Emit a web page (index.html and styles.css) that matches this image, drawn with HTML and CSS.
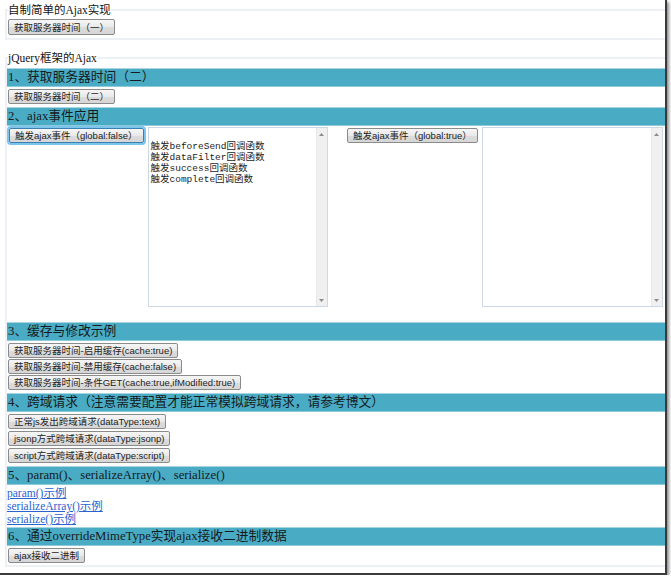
FILE: index.html
```html
<!DOCTYPE html>
<html lang="zh-CN">
<head>
<meta charset="utf-8">
<title>Ajax 示例</title>
<link rel="stylesheet" href="styles.css">
</head>
<body>
<div class="window">
  <fieldset class="box box-first">
    <legend>自制简单的Ajax实现</legend>
    <button class="btn btn-tall">获取服务器时间（一）</button>
  </fieldset>

  <fieldset class="box box-second">
    <legend>jQuery框架的Ajax</legend>

    <h3 class="bar bar-first">1、获取服务器时间（二）</h3>
    <div class="sec">
      <button class="btn">获取服务器时间（二）</button>
    </div>

    <h3 class="bar">2、ajax事件应用</h3>
    <div class="events">
      <div class="col col-left">
        <button class="btn btn-focus">触发ajax事件（global:false）</button>
        <div class="ta ta-left">
<textarea class="log" readonly>

触发beforeSend回调函数
触发dataFilter回调函数
触发success回调函数
触发complete回调函数</textarea>
          <div class="sb">
            <svg width="5" height="3" viewBox="0 0 5 3"><polygon points="0,3 2.5,0 5,3" fill="#8c8c8c"/></svg>
            <svg width="5" height="3" viewBox="0 0 5 3"><polygon points="0,0 5,0 2.5,3" fill="#8c8c8c"/></svg>
          </div>
        </div>
      </div>
      <div class="col col-right">
        <button class="btn">触发ajax事件（global:true）</button>
        <div class="ta ta-right">
          <textarea class="log" readonly></textarea>
          <div class="sb">
            <svg width="5" height="3" viewBox="0 0 5 3"><polygon points="0,3 2.5,0 5,3" fill="#8c8c8c"/></svg>
            <svg width="5" height="3" viewBox="0 0 5 3"><polygon points="0,0 5,0 2.5,3" fill="#8c8c8c"/></svg>
          </div>
        </div>
      </div>
    </div>

    <h3 class="bar">3、缓存与修改示例</h3>
    <div class="sec">
      <button class="btn">获取服务器时间-启用缓存(cache:true)</button>
      <button class="btn">获取服务器时间-禁用缓存(cache:false)</button>
      <button class="btn">获取服务器时间-条件GET(cache:true,ifModified:true)</button>
    </div>

    <h3 class="bar">4、跨域请求（注意需要配置才能正常模拟跨域请求，请参考博文）</h3>
    <div class="sec sec-loose">
      <button class="btn">正常js发出跨域请求(dataType:text)</button>
      <button class="btn">jsonp方式跨域请求(dataType:jsonp)</button>
      <button class="btn">script方式跨域请求(dataType:script)</button>
    </div>

    <h3 class="bar">5、param()、serializeArray()、serialize()</h3>
    <div class="links">
      <a href="#">param()示例</a>
      <a href="#">serializeArray()示例</a>
      <a href="#">serialize()示例</a>
    </div>

    <h3 class="bar">6、通过overrideMimeType实现ajax接收二进制数据</h3>
    <div class="sec sec-last">
      <button class="btn">ajax接收二进制</button>
    </div>
  </fieldset>
</div>
</body>
</html>
```

FILE: styles.css
```css
* {
  box-sizing: border-box;
}

html,
body {
  margin: 0;
  padding: 0;
  background: #ffffff;
}

body {
  font-family: "Liberation Serif", "Noto Sans CJK SC", serif;
  color: #141414;
}

.window {
  width: 667px;
  height: 575px;
  padding-top: 3px;
  overflow: hidden;
  background: #ffffff;
  border-right: 2px solid #3a3a3a;
  border-bottom: 2px solid #3a3a3a;
  box-shadow: 2px 2px 3px rgba(0, 0, 0, 0.45);
}

.box {
  margin: 0 -12px 0 5px;
  padding: 0 0 3px 0;
  border: 2px solid #edf1f5;
  min-width: 0;
}

.box legend {
  padding: 0;
  margin-left: 1px;
  font-size: 11.5px;
  line-height: 14px;
  color: #141414;
}

.box-first .btn {
  margin-top: 2px;
}

.box-second {
  margin-top: 11px;
  padding-bottom: 0;
}

.bar {
  margin: 0;
  height: 19px;
  padding-left: 1px;
  background: #4aabc5;
  border-top: 1px solid #a9d5e2;
  border-bottom: 1px solid #8fcadb;
  font-size: 12.75px;
  line-height: 17px;
  font-weight: normal;
  color: #151b20;
  white-space: nowrap;
}

.bar-first {
  margin-top: 3px;
}

.sec {
  padding: 2px 0 3px 0;
  display: flex;
  flex-direction: column;
  align-items: flex-start;
  gap: 1px;
}

.sec-loose {
  gap: 2px;
}

.sec-last {
  padding-bottom: 2px;
}

.btn {
  display: block;
  height: 15px;
  margin: 0 0 0 1px;
  padding: 0 5px;
  font-family: "Liberation Sans", "Noto Sans CJK SC", sans-serif;
  font-size: 9.5px;
  line-height: 13px;
  color: #1e1e1e;
  white-space: nowrap;
  background: linear-gradient(#f6f6f6, #e9e9e9 50%, #dcdcdc 51%, #d6d6d6);
  border: 1px solid #8b8b8b;
  border-radius: 2px;
}

.btn-tall {
  height: 16px;
}

.btn-focus {
  margin-left: 2px;
  border-color: #3c7fb1;
  box-shadow: 0 0 0 2px #7cc4ea;
}

.events {
  display: flex;
  padding: 1px 0 15px 0;
}

.col {
  display: flex;
  align-items: flex-start;
  gap: 4px;
}

.col .btn {
  margin-top: 1px;
}

.col-left {
  width: 338px;
}

.col-right {
  flex: 1;
}

.col-right .btn {
  margin-left: 2px;
}

.ta {
  display: flex;
  height: 180px;
  border: 1px solid #cbd9e7;
  background: #ffffff;
}

.ta-left {
  width: 180px;
}

.ta-right {
  width: 181px;
}

.log {
  flex: 1;
  min-width: 0;
  margin: 0;
  padding: 2px 2px;
  border: 0;
  outline: none;
  resize: none;
  overflow: hidden;
  background: #ffffff;
  color: #1c1c1c;
  font-family: "Liberation Mono", "Noto Sans CJK SC", monospace;
  font-size: 9.5px;
  line-height: 11px;
  white-space: pre;
}

.sb {
  width: 11px;
  flex: none;
  display: flex;
  flex-direction: column;
  justify-content: space-between;
  align-items: center;
  padding: 5px 0 4px 0;
  background: #f0f0f0;
  border-left: 1px solid #e9e9e9;
}

.sb svg {
  display: block;
}

.links {
  padding: 2px 0 1px 0;
  font-size: 11.5px;
  line-height: 13px;
}

.links a {
  display: block;
  width: max-content;
  color: #2a62d0;
  text-decoration: underline;
}
```
